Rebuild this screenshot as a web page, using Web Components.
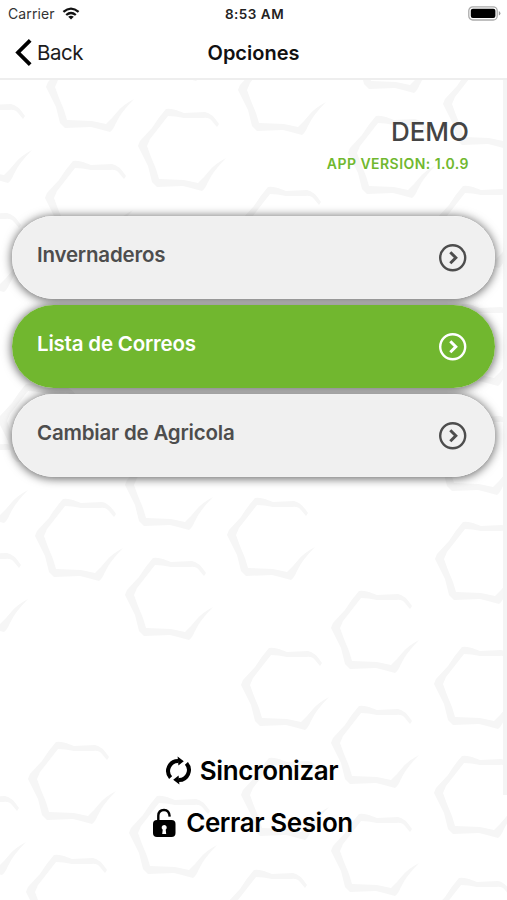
<!DOCTYPE html>
<html lang="es"><head><meta charset="utf-8"><title>Opciones</title>
<style>html,body{margin:0;height:100%;background:#fff}body{font-family:Inter,"Liberation Sans",sans-serif;color:#111}</style></head>
<body><options-screen></options-screen>
<script>
const define=(name,html,setup)=>customElements.define(name,class extends HTMLElement{
  constructor(){super();this.attachShadow({mode:'open'}).innerHTML=html;}
  connectedCallback(){if(setup)setup(this.shadowRoot,this);}
});

define('status-bar',`<style>
:host{display:grid;grid-template-columns:1fr auto 1fr;align-items:center;height:27px;padding:0 6px 0 8px;box-sizing:border-box;font-size:14px;line-height:27px}
.l{display:flex;align-items:center;gap:6px;color:#333}.l span{width:48px;letter-spacing:.1px;white-space:nowrap}.c{font-weight:600;font-size:13.5px;letter-spacing:.5px;color:#222;padding-top:1px;line-height:26px}
.r{justify-self:end;display:flex}svg{display:block}
</style><div class="l"><span>Carrier</span><svg width="18" height="13" viewBox="0 0 18 13" fill="none" stroke="#111" stroke-width="2.3"><path d="M1.4 4.9Q9-1.7 16.6 4.9M4.2 8Q9 3.9 13.8 8"/><path d="M9 12.6 6.2 9.8Q9 7.7 11.8 9.8Z" fill="#111" stroke="none"/></svg></div>
<div class="c">8:53 AM</div>
<div class="r"><svg width="33" height="15" viewBox="0 0 33 15"><rect x=".8" y=".8" width="28.4" height="13.2" rx="4" fill="#fff" stroke="#aaa" stroke-width="1.3"/><rect x="2.8" y="2.8" width="24.6" height="9.2" rx="2" fill="#000"/><path d="M30.8 5v4.6q1.6-.7 1.6-2.3T30.8 5" fill="#999"/></svg></div>`);

define('nav-bar',`<style>
:host{display:grid;grid-template-columns:1fr auto 1fr;align-items:center;height:53px;box-sizing:border-box;border-bottom:2px solid #eee;padding:0 15px;background:#fff}
.b{display:flex;align-items:center;gap:5px;font-size:20.5px;letter-spacing:-.45px;color:#1c1c1c}.t{font-size:20px;font-weight:600;letter-spacing:0;color:#111}
svg{display:block}
</style><div class="b"><svg width="17" height="27" viewBox="0 0 17 27" fill="none" stroke="#000" stroke-width="3.8"><path d="M15.2 1.4 3 13.5 15.2 25.6"/></svg><span><slot name="back"></slot></span></div><div class="t"><slot></slot></div>`);

define('hex-pattern',`<style>:host{display:block;position:absolute;inset:0;overflow:hidden}svg{display:block}</style>
<svg width="507" height="900"><defs><path id="h" d="M28-36Q30-37 38-35L46-32L67-33Q74-32 81-21L79-18L74-24Q71-28 65-27L46-27Q37-29 30-29L12-6L9 1L13 12L18 24L21 34L46 35L60 38L66 32L72 25Q77 19 88 13Q75 26 70 37Q67 44 64 46L53 43L45 41L19 42L14 37L10 21L0 1L2-4L14-17Q20-27 28-36Z"/></defs><g fill="#f6f6f6"></g></svg>`,r=>{
  const spots=[[132,35],[46,86],[138,145],[45,197],[238,89],[-56,137],[350,47],[443,103],[348,152],[240,223],[435,222],[-60,246],[434,340],[-2,420],[433,449],[35,535],[125,484],[125,594],[227,534],[-60,586],[-60,477],[241,684],[435,558],[331,627],[434,683],[28,778],[129,832],[26,891],[-62,829],[331,742],[434,792],[331,850],[241,794],[431,914],[226,906]];
  r.querySelector('g').innerHTML=spots.map(([x,y])=>`<use href="#h" x="${x}" y="${y}"/>`).join('');
});

define('user-heading',`<style>:host{display:flex;flex-direction:column;align-items:flex-end;padding:36px 38px 0 0;height:136px;box-sizing:border-box;position:relative}
.n{font-size:26px;line-height:31px;font-weight:500;letter-spacing:0;color:#444}.v{font-size:14px;line-height:20px;margin-top:7px;font-weight:600;letter-spacing:.45px;color:#70b82f}</style>
<div class="n"><slot></slot></div><div class="v"><slot name="version"></slot></div>`);

define('option-row',`<style>:host{display:flex;align-items:center;justify-content:space-between;height:83px;box-sizing:border-box;padding:0 27px 0 25px;color:#4d4d4d;position:relative}
:host::before,:host::after{content:"";position:absolute;inset:0;border-radius:42px;z-index:-1}
:host::before{box-shadow:0 1px 10px 1px rgba(0,0,0,.58);z-index:-2}
:host::after{background:#f0f0f0;box-shadow:inset 0 0 1px #fff}
:host([active]){color:#fff}:host([active])::after{background:#71b72f;box-shadow:none}
span{font-size:20.5px;line-height:26px;font-weight:600;letter-spacing:-.2px;padding-bottom:6px}svg{display:block}</style>
<span><slot></slot></span><svg width="30" height="30" viewBox="0 0 30 30" fill="none" stroke="currentColor"><circle cx="14.7" cy="14.7" r="12.5" stroke-width="2.4"/><path d="m12.3 9.2 5.5 5.5-5.5 5.5" stroke-width="3"/></svg>`);

define('action-link',`<style>:host{display:flex;align-items:center;justify-content:center;height:52px;gap:8px;color:#000;font-size:26px;line-height:52px;font-weight:600;letter-spacing:-.42px;padding-right:4px}
svg{display:block}svg.lock{display:none}:host([icon=lock]) .lock{display:block}:host([icon=lock]) .sync{display:none}:host([icon=lock]){gap:10px;padding-right:2px}</style>
<svg class="sync" width="27" height="30" viewBox="0 0 27 30"><g fill="none" stroke="#000" stroke-width="4"><path d="M5.6 21.6A10 10 0 0 1 13 5"/><path d="M21.4 7.4A10 10 0 0 1 14 24"/></g><path d="M12.6.4 18.8 5.2 13.4 9.4ZM14.4 28.6 8.2 23.8 13.6 19.6Z"/></svg>
<svg class="lock" width="24" height="30" viewBox="0 0 24 30"><path d="M6.3 13V7.8Q6.5 2 12 2Q17.2 2 17.7 8.6" fill="none" stroke="#000" stroke-width="2.4"/><rect x="1" y="12" width="22.5" height="17" rx="4"/><path d="M12.2 17a2.6 2.6 0 0 1 1.5 4.7l.5 4.2h-4l.5-4.2A2.6 2.6 0 0 1 12.2 17Z" fill="#fff"/></svg><span><slot></slot></span>`);

define('options-screen',`<style>:host{display:flex;flex-direction:column;width:507px;height:900px;overflow:hidden;position:relative}
main{flex:1;position:relative;display:flex;flex-direction:column}hex-pattern{top:-80px}
.edge{position:absolute;right:0;top:0;width:4px;height:715px;background:#f4f4f4}
.list{display:flex;flex-direction:column;gap:6px;padding:0 12px;position:relative;isolation:isolate}.actions{position:relative;margin-top:auto;padding-bottom:51px}
status-bar,nav-bar{position:relative;z-index:1;background:#fff}</style>
<status-bar></status-bar><nav-bar><span slot="back">Back</span>Opciones</nav-bar>
<main><hex-pattern></hex-pattern><div class="edge"></div><user-heading>DEMO<span slot="version">APP VERSION: 1.0.9</span></user-heading>
<div class="list"><option-row>Invernaderos</option-row><option-row active>Lista de Correos</option-row><option-row>Cambiar de Agricola</option-row></div>
<div class="actions"><action-link icon="sync">Sincronizar</action-link><action-link icon="lock">Cerrar Sesion</action-link></div></main>`);
</script></body></html>
